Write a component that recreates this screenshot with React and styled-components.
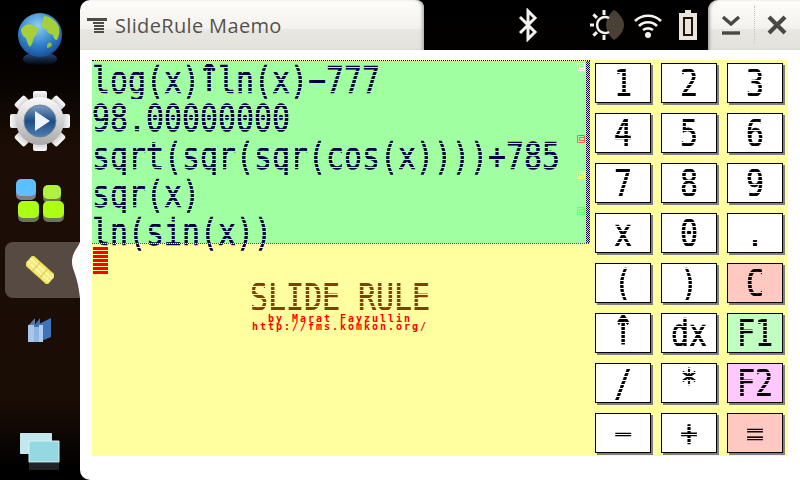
import styled, { createGlobalStyle } from "styled-components";

const GlobalStyle = createGlobalStyle`
	html, body { margin: 0; background: #000; }
`;

const RESULTS = [
	"log(x)↑ln(x)−777",
	"98.00000000",
	"sqrt(sqr(sqr(cos(x))))+785",
	"sqr(x)",
	"ln(sin(x))",
];

const KEYS = [
	["1"], ["2"], ["3"],
	["4"], ["5"], ["6"],
	["7"], ["8"], ["9"],
	["x"], ["0"], ["."],
	["("], [")"], ["C", "#ffc8c0"],
	["↑"], ["dx"], ["F1", "#c0ffc0"],
	["/"], ["*"], ["F2", "#ffc8ff"],
	["−"], ["+"], ["=", "#ffc8c0"],
];

const MARKERS = [
	{ top: 2, color: "#ffffff" },
	{ top: 74, color: "#ff6060" },
	{ top: 110, color: "#ffff60" },
	{ top: 146, color: "#60ff60" },
];

function Globe() {
	return (
		<svg width="50" height="62" viewBox="0 0 50 62">
			<defs>
				<radialGradient id="sea" cx="0.45" cy="0.3" r="0.8">
					<stop offset="0" stopColor="#8fd0f4" />
					<stop offset="0.55" stopColor="#2f7fc8" />
					<stop offset="1" stopColor="#123f86" />
				</radialGradient>
				<linearGradient id="mirror" x1="0" y1="0" x2="0" y2="1">
					<stop offset="0" stopColor="#2a4f88" />
					<stop offset="1" stopColor="#000" />
				</linearGradient>
			</defs>
			<ellipse cx="25" cy="49" rx="17" ry="7" fill="url(#mirror)" />
			<circle cx="25" cy="25" r="22" fill="url(#sea)" />
			<path d="M6 19c3-4 8-6 11-4 3 1 8 3 6 6-2 2-1 4-4 6-1 4-2 7-4 10-2-2-3-6-4-9-3-1-5-5-5-9z" fill="#a6cf3c" />
			<path d="M29 6c5 0 12 4 15 11 1 5 0 9-2 13-2 0-4-2-4-5-3-1-6-2-6-5-3-1-5-3-6-5 1-2 2-4 3-9z" fill="#a6cf3c" />
			<path d="M33 33c2-1 4 0 4 2-1 2-3 3-5 3 0-2 0-3 1-5z" fill="#8fbf38" />
		</svg>
	);
}

function Gear() {
	const teeth = [0, 45, 90, 135, 180, 225, 270, 315];
	return (
		<svg width="62" height="62" viewBox="0 0 62 62">
			<defs>
				<linearGradient id="steel" x1="0" y1="0" x2="0" y2="1">
					<stop offset="0" stopColor="#fbfbfb" />
					<stop offset="1" stopColor="#a9a9a9" />
				</linearGradient>
				<linearGradient id="hub" x1="0" y1="0" x2="0" y2="1">
					<stop offset="0" stopColor="#7f9fc4" />
					<stop offset="0.5" stopColor="#1d4c86" />
					<stop offset="1" stopColor="#4f7fb4" />
				</linearGradient>
			</defs>
			{teeth.map((a) => (
				<rect key={a} x="24" y="1" width="14" height="14" rx="2" fill="url(#steel)" transform={`rotate(${a} 31 31)`} />
			))}
			<circle cx="31" cy="31" r="24" fill="url(#steel)" />
			<circle cx="31" cy="31" r="16" fill="url(#hub)" stroke="#6d7f95" />
			<path d="M26 21l15 10-15 10z" fill="#eef3f8" />
		</svg>
	);
}

function Cube({ x, y, w, h, top, side }) {
	return (
		<>
			<rect x={x} y={y + 4} width={w} height={h} rx="5" fill={side} />
			<rect x={x} y={y} width={w} height={h} rx="5" fill={top} />
		</>
	);
}

function Apps() {
	return (
		<svg width="50" height="46" viewBox="0 0 50 46">
			<Cube x={1} y={1} w={20} h={17} top="#5cc0ff" side="#7d7f82" />
			<Cube x={28} y={7} w={18} h={14} top="#b0f040" side="#6d7558" />
			<Cube x={3} y={23} w={21} h={17} top="#aaff14" side="#6d7558" />
			<Cube x={28} y={23} w={21} h={17} top="#aaff14" side="#6d7558" />
		</svg>
	);
}

function Ruler() {
	return (
		<svg width="28" height="28" viewBox="0 0 28 28">
			<g transform="rotate(42 14 14)">
				<rect x="-1" y="8" width="30" height="12" fill="#f4ec78" stroke="#e8d850" />
				<path d="M-1 12h30M-1 16h30" stroke="#fffbd0" strokeWidth="1" />
				<path d="M9 8v12M19 8v12" stroke="#d8c850" strokeWidth="1" />
			</g>
		</svg>
	);
}

function Books() {
	return (
		<svg width="26" height="28" viewBox="0 0 26 28">
			<path d="M1 10l7-8v22l-7 2z" fill="#5f7895" />
			<rect x="1" y="9" width="6" height="17" fill="#a6c6ee" />
			<path d="M7 10l6-8v22l-6 2z" fill="#3b72b4" />
			<rect x="7" y="11" width="5" height="15" fill="#8fb4e4" />
			<path d="M12 8l12-6v19l-12 5z" fill="#3f73b8" />
			<rect x="12" y="9" width="4" height="17" fill="#b0cdf0" />
		</svg>
	);
}

function Windows() {
	return (
		<svg width="42" height="40" viewBox="0 0 42 40">
			<rect x="1" y="1" width="32" height="21" rx="1" fill="#c2e8ee" />
			<path d="M10 9h30v21H10z" fill="#94d8e2" stroke="#d8f0f4" />
			<rect x="10" y="31" width="30" height="7" fill="#202426" />
		</svg>
	);
}

function MenuGlyph() {
	return (
		<svg width="20" height="16" viewBox="0 0 20 16" fill="#4f4c46">
			<rect x="0" y="1" width="20" height="3" />
			<rect x="6" y="5" width="11" height="2" />
			<rect x="7" y="8" width="10" height="2" />
			<rect x="7" y="11" width="10" height="2" />
			<rect x="7" y="14" width="10" height="2" />
		</svg>
	);
}

function Bluetooth() {
	return (
		<svg width="20" height="34" viewBox="0 0 20 34" fill="none" stroke="#f2f0ec" strokeWidth="3">
			<path d="M2 9l15 15-7 7V3l7 7L2 25" />
		</svg>
	);
}

function Brightness() {
	const rays = [90, 135, 180, 225, 270];
	return (
		<svg width="36" height="34" viewBox="0 0 36 34">
			<path d="M24 2c5 3 10 9 10 15s-5 12-10 15c-4-3-8-9-8-15s4-12 8-15z" fill="#4a4136" />
			<path d="M19 10a8 8 0 1 0 0 14" fill="none" stroke="#f2f0ec" strokeWidth="2.5" />
			<g stroke="#f2f0ec" strokeWidth="3">
				{rays.map((a) => (
					<path key={a} d="M14 2v5" transform={`rotate(${a - 270} 14 17)`} />
				))}
			</g>
		</svg>
	);
}

function Wifi() {
	return (
		<svg width="30" height="28" viewBox="0 0 30 28" fill="none" stroke="#f6f4f0" strokeWidth="2.6">
			<path d="M2 10c7-7 19-7 26 0" />
			<path d="M6 15c5-5 13-5 18 0" />
			<path d="M10 19c3-2 7-2 10 0" />
			<circle cx="15" cy="24" r="3" fill="#f6f4f0" stroke="none" />
		</svg>
	);
}

function Battery() {
	return (
		<svg width="18" height="30" viewBox="0 0 18 30">
			<path d="M6 0h6v3h6v27H0V3h6z" fill="#e8e4de" />
			<rect x="4" y="7" width="10" height="19" fill="#20140a" />
			<rect x="6" y="9" width="6" height="15" fill="#e8e4de" />
		</svg>
	);
}

function Minimize() {
	return (
		<svg width="20" height="22" viewBox="0 0 20 22" fill="none" stroke="#4a4842" strokeWidth="3.4">
			<path d="M2 3l8 7 8-7" />
			<path d="M1 19h18" />
		</svg>
	);
}

function Close() {
	return (
		<svg width="20" height="20" viewBox="0 0 20 20" fill="none" stroke="#4a4842" strokeWidth="4.2">
			<path d="M2 2l16 16M18 2L2 18" />
		</svg>
	);
}

function Marker({ top, color }) {
	return (
		<MarkerBox $top={top}>
			<svg width="8" height="8" viewBox="0 0 8 8" fill="none" stroke={color}>
				<path d="M.5.5h7v7h-7zM2.5 2.5h5M2.5 2.5v3h5" />
			</svg>
		</MarkerBox>
	);
}

// the arrow glyph is much shorter than the rest of the matrix font, so stretch it
function Dots({ text, color }) {
	const parts = text.split("↑");
	return (
		<DotLine $color={color}>
			<span>
				{parts.map((part, i) => (
					<span key={i}>
						{i > 0 && <TallArrow>↑</TallArrow>}
						{part}
					</span>
				))}
			</span>
		</DotLine>
	);
}

export default function App() {
	return (
		<Screen>
			<GlobalStyle />
			<Sidebar>
				<NavItem $h={82}><Globe /></NavItem>
				<NavItem $h={78}><Gear /></NavItem>
				<NavItem $h={82}><Apps /></NavItem>
				<ActiveItem>
					<Ruler />
					<Notch width="9" height="56" viewBox="0 0 9 56">
						<path d="M9 0C7 6 1 10 1 20c0 8 6 14 8 36z" fill="#fff" />
					</Notch>
				</ActiveItem>
				<NavItem $h={64}><Books /></NavItem>
				<NavItem $h={118} $end><Windows /></NavItem>
			</Sidebar>
			<Main>
				<Header>
					<TitleTab>
						<MenuGlyph />
						<Title>SlideRule Maemo</Title>
					</TitleTab>
					<Status>
						<StatusIcon $w={50}><Bluetooth /></StatusIcon>
						<StatusIcon $w={36} $gap={37}><Brightness /></StatusIcon>
						<StatusIcon $w={44}><Wifi /></StatusIcon>
						<StatusIcon $w={36}><Battery /></StatusIcon>
					</Status>
					<WindowTab>
						<WindowButton><Minimize /></WindowButton>
						<WindowButton $divider><Close /></WindowButton>
					</WindowTab>
				</Header>
				<Body>
					<Machine>
						<Screenful>
							<Output>
								{RESULTS.map((line) => (
									<Dots key={line} text={line} color="#000040" />
								))}
								{MARKERS.map((m) => (
									<Marker key={m.top} top={m.top} color={m.color} />
								))}
							</Output>
							<Checker />
						</Screenful>
						<Rule />
						<Banner>
							<Cursor />
							<Credits>
								<Dots text="SLIDE RULE" color="#804000" />
								<SmallPrint>by Marat Fayzullin</SmallPrint>
								<SmallPrint>http://fms.komkon.org/</SmallPrint>
							</Credits>
						</Banner>
					</Machine>
					<Keypad>
						{KEYS.map(([label, color]) => (
							<Key key={label} $bg={color}>
								<Dots text={label} color="#000" />
							</Key>
						))}
					</Keypad>
				</Body>
			</Main>
		</Screen>
	);
}

const Screen = styled.div`
	display: flex;
	width: 800px;
	height: 480px;
	overflow: hidden;
	background: linear-gradient(180deg, #000 0, #050200 70px, #1c0e06 150px, #1a0d06 400px, #000 470px);
`;

const Sidebar = styled.nav`
	display: flex;
	flex-direction: column;
	width: 80px;
	flex-shrink: 0;
`;

const NavItem = styled.div`
	display: flex;
	justify-content: center;
	align-items: ${(p) => (p.$end ? "flex-end" : "center")};
	height: ${(p) => p.$h}px;
	padding-bottom: ${(p) => (p.$end ? 8 : 0)}px;
	box-sizing: border-box;
`;

const ActiveItem = styled.div`
	position: relative;
	display: flex;
	justify-content: center;
	align-items: center;
	height: 56px;
	margin-left: 5px;
	padding-right: 5px;
	border-radius: 8px 0 0 8px;
	background: #574a43;
`;

const Notch = styled.svg`
	position: absolute;
	right: 0;
	top: 0;
`;

const Main = styled.main`
	display: flex;
	flex-direction: column;
	flex: 1;
	min-width: 0;
`;

const Header = styled.header`
	display: flex;
	height: 50px;
	flex-shrink: 0;
`;

const TitleTab = styled.div`
	display: flex;
	align-items: center;
	gap: 8px;
	width: 344px;
	padding: 0 0 0 7px;
	box-sizing: border-box;
	border-radius: 10px 8px 0 0;
	box-shadow: inset -3px 0 3px -1px #b4b2ac;
	background: linear-gradient(180deg, #fffdf9 0, #f4f2ee 28px, #e8e6e0 30px, #e4e2dc 50px);
`;

const Title = styled.h1`
	margin: 0;
	font: 400 20px "Open Sans", sans-serif;
	letter-spacing: 0.35px;
	color: #55524c;
`;

const Status = styled.div`
	display: flex;
	align-items: center;
	flex: 1;
	justify-content: flex-end;
	padding-right: 2px;
`;

const StatusIcon = styled.div`
	display: flex;
	justify-content: center;
	width: ${(p) => p.$w}px;
	margin-left: ${(p) => p.$gap || 0}px;
`;

const WindowTab = styled.div`
	display: flex;
	width: 92px;
	border-radius: 10px 0 0 0;
	box-shadow: inset 3px 0 3px -1px #a9a7a2;
	background: linear-gradient(180deg, #fffdf9 0, #f4f2ee 28px, #e8e6e0 30px, #e4e2dc 50px);
`;

const WindowButton = styled.div`
	display: flex;
	justify-content: center;
	align-items: center;
	flex: 1;
	border-left: ${(p) => (p.$divider ? "1px dotted #c4c2bc" : "none")};
	margin: 6px 0;
`;

const Body = styled.div`
	display: flex;
	flex: 1;
	padding: 10px 12px 24px;
	background: #fff;
	border-radius: 0 0 0 10px;
`;

const Machine = styled.section`
	display: flex;
	flex-direction: column;
	width: 498px;
	background: #ffffa0;
`;

const Screenful = styled.div`
	display: flex;
	height: 182px;
	border-top: 1px dotted #000040;
`;

const Output = styled.div`
	position: relative;
	flex: 1;
	padding: 1px 0 0 0;
	background: #a0ffa0;
`;

const Checker = styled.div`
	width: 4px;
	background: repeating-conic-gradient(#000040 0 25%, #a0ffa0 0 50%) 0 0 / 2px 2px;
`;

const MarkerBox = styled.div`
	position: absolute;
	right: 1px;
	top: ${(p) => p.$top}px;
	width: 8px;
	height: 8px;
	line-height: 0;
`;

const Rule = styled.div`
	height: 1px;
	flex-shrink: 0;
	background: repeating-linear-gradient(90deg, #804000 0 1px, #ffffa0 1px 2px);
`;

const Banner = styled.div`
	display: flex;
	flex: 1;
	flex-direction: column;
	align-items: flex-start;
`;

const Cursor = styled.div`
	width: 15px;
	height: 27px;
	margin: 3px 0 0 1px;
	background: repeating-linear-gradient(180deg, #ff0000 0 3px, #ffffa0 3px 4px);
`;

const Credits = styled.div`
	display: flex;
	flex-direction: column;
	align-items: center;
	width: 180px;
	margin: 5px 0 0 158px;
`;

const DotLine = styled.div`
	height: 36px;
	width: fit-content;
	font: 400 30px/28px "DejaVu Sans Mono", monospace;
	letter-spacing: -0.06px;
	white-space: pre;
	color: ${(p) => p.$color};
	-webkit-text-stroke: 0.5px ${(p) => p.$color};
	mask-image: repeating-linear-gradient(180deg, #000 0 3px, transparent 3px 4px);

	> span {
		display: block;
		height: 28px;
		margin-top: 2px;
		transform-origin: top;
		transform: scaleY(1.22);
	}
`;

const TallArrow = styled.span`
	display: inline-block;
	transform-origin: bottom;
	transform: scale(1.2, 1.5);
`;

const SmallPrint = styled.div`
	height: 8px;
	font: 700 10px/8px "DejaVu Sans Mono", monospace;
	letter-spacing: 1.98px;
	white-space: pre;
	color: #ff0000;
`;

const Keypad = styled.div`
	display: grid;
	grid-template-columns: repeat(3, 56px);
	grid-auto-rows: 40px;
	gap: 10px;
	padding: 3px 5px;
	width: 198px;
	box-sizing: border-box;
	background: #ffffa0;
`;

const Key = styled.div`
	display: flex;
	justify-content: center;
	align-items: center;
	box-sizing: border-box;
	border: 1px solid #000;
	box-shadow: 2px 2px 0 #808080;
	background: ${(p) => p.$bg || "#fff"};
`;
